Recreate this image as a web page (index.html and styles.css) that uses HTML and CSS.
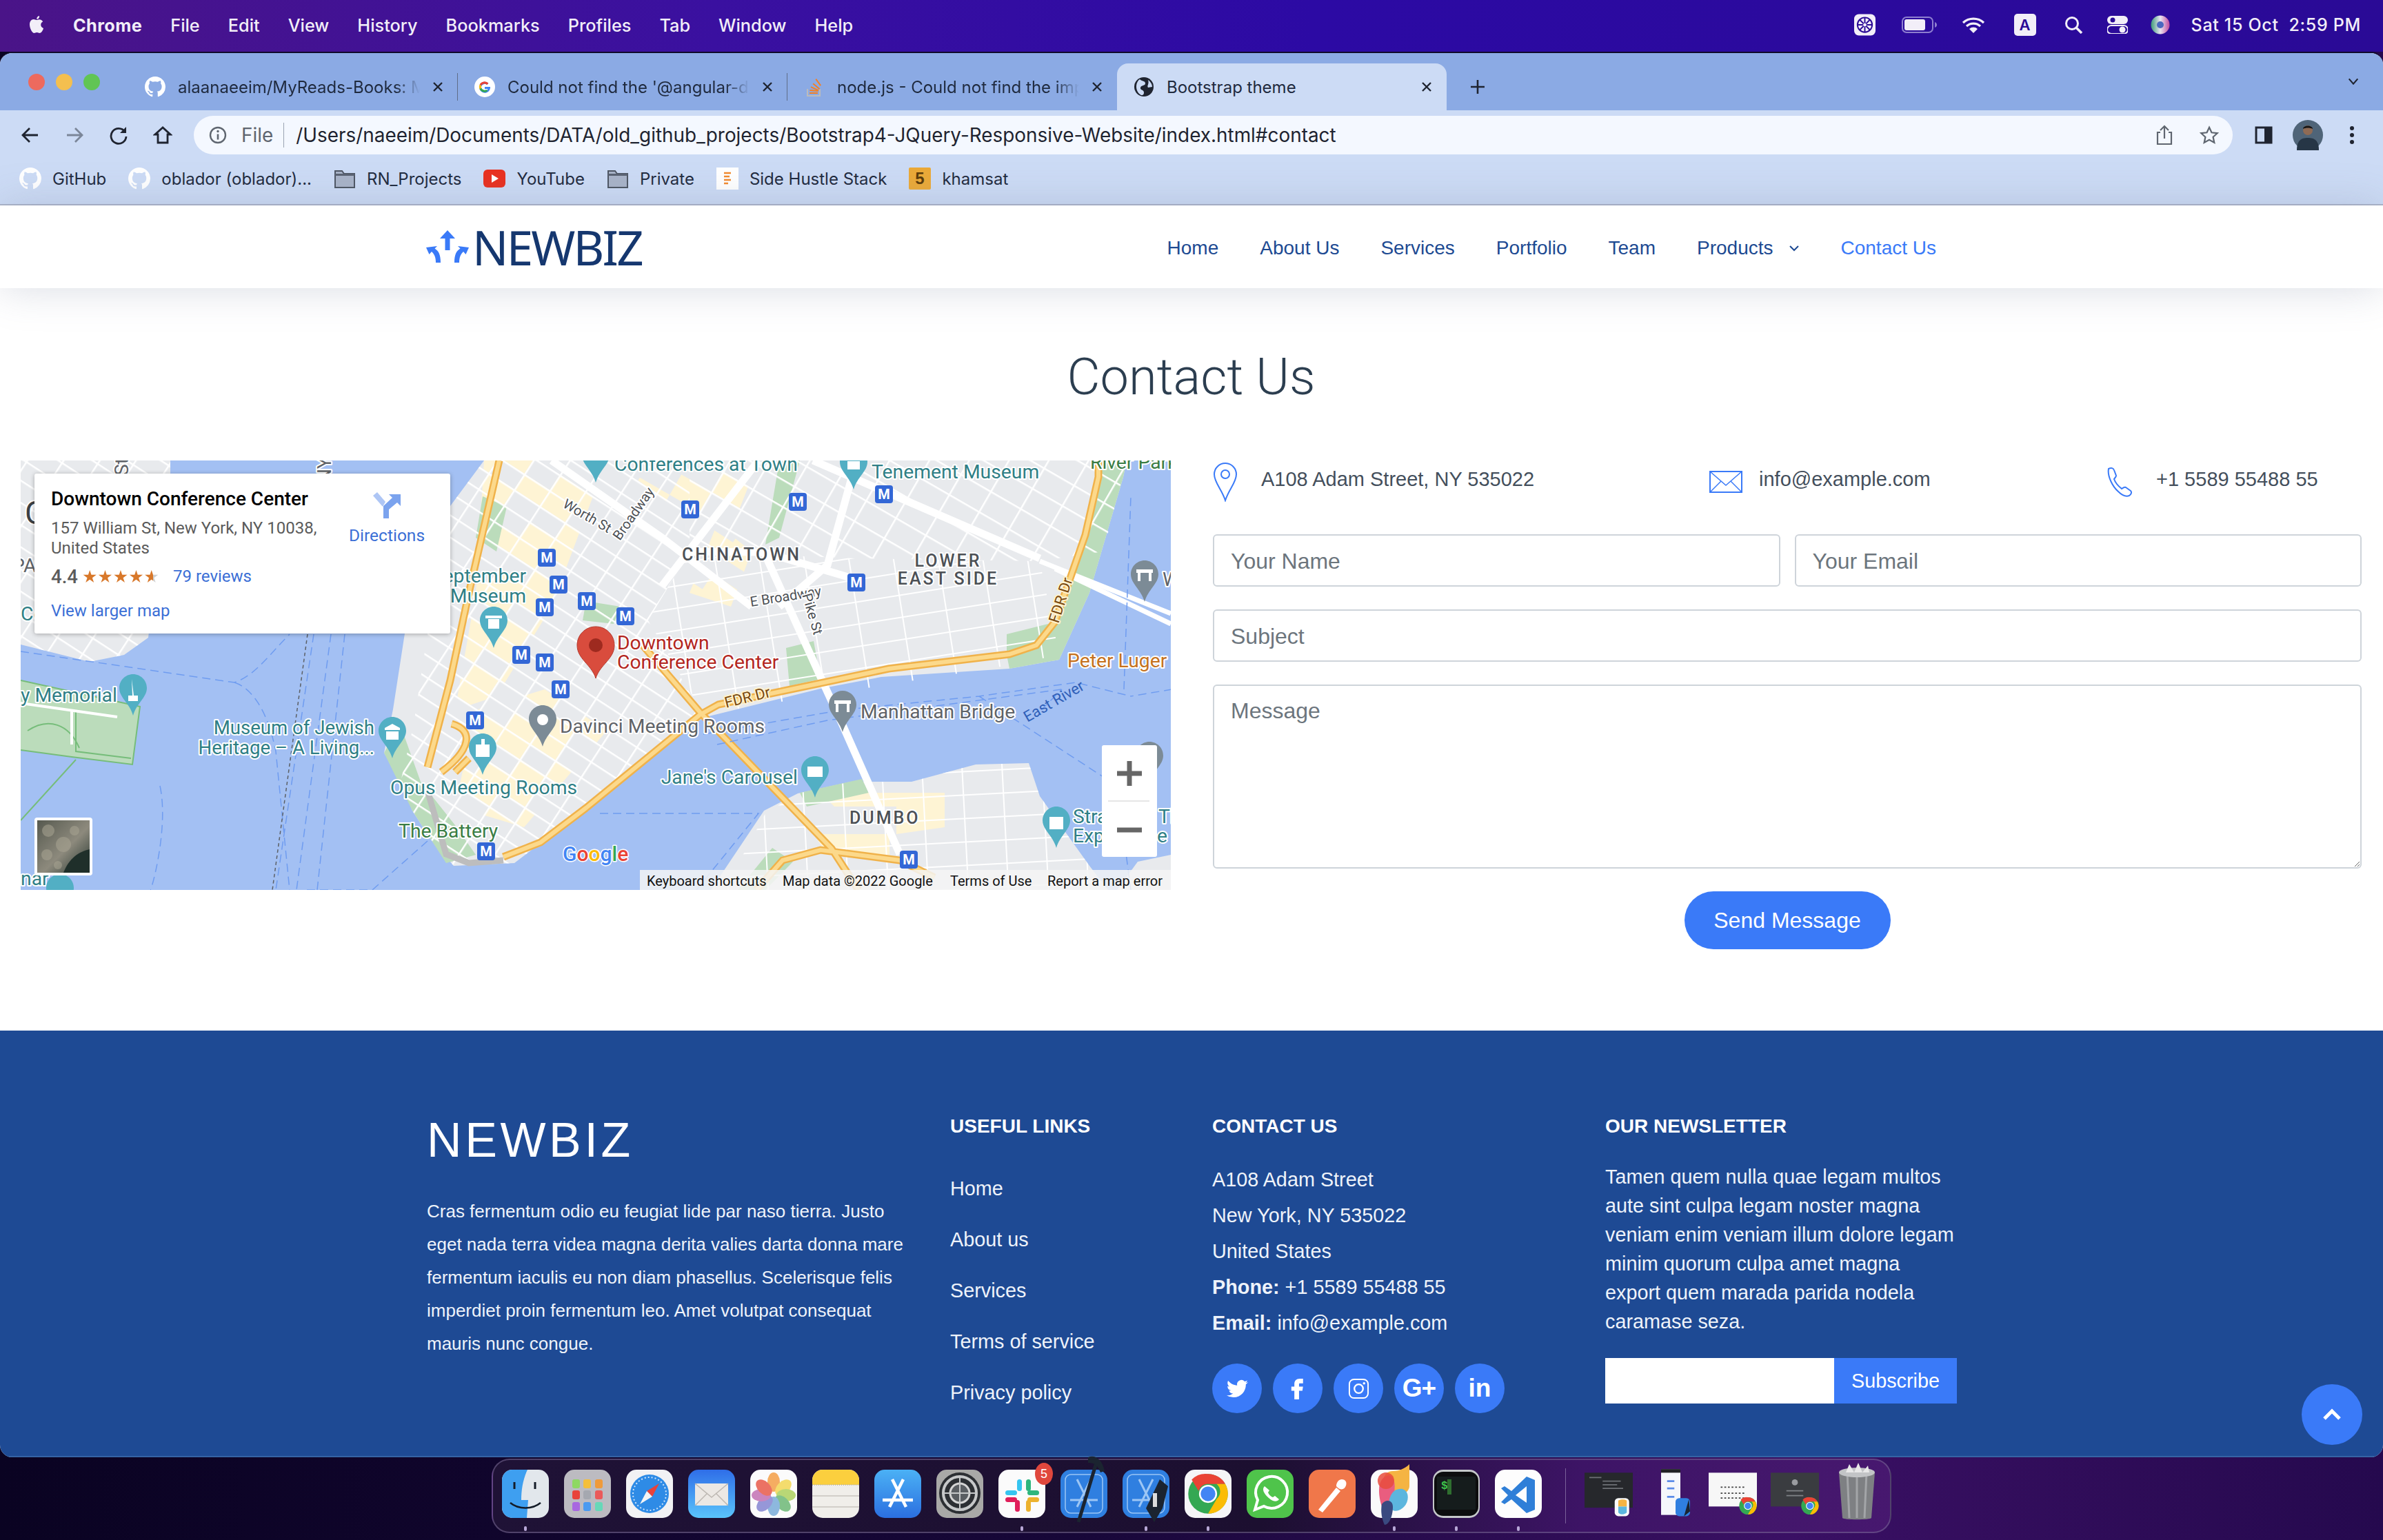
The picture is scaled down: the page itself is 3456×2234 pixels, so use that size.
FILE: index.html
```html
<!DOCTYPE html>
<html lang="en">
<head>
<meta charset="utf-8">
<title>Bootstrap theme</title>
<link rel="stylesheet" href="styles.css">
</head>
<body>
<svg class="defs" width="0" height="0">
  <defs>
    <symbol id="gh" viewBox="0 0 16 16"><path fill="#fff" d="M8 0C3.58 0 0 3.58 0 8c0 3.54 2.29 6.53 5.47 7.59.4.07.55-.17.55-.38 0-.19-.01-.82-.01-1.49-2.01.37-2.53-.49-2.69-.94-.09-.23-.48-.94-.82-1.13-.28-.15-.68-.52-.01-.53.63-.01 1.08.58 1.23.82.72 1.21 1.87.87 2.33.66.07-.52.28-.87.51-1.07-1.78-.2-3.64-.89-3.64-3.95 0-.87.31-1.59.82-2.15-.08-.2-.36-1.02.08-2.12 0 0 .67-.21 2.2.82.64-.18 1.32-.27 2-.27.68 0 1.36.09 2 .27 1.53-1.04 2.2-.82 2.2-.82.44 1.1.16 1.92.08 2.12.51.56.82 1.27.82 2.15 0 3.07-1.87 3.75-3.65 3.95.29.25.54.73.54 1.48 0 1.07-.01 1.93-.01 2.2 0 .21.15.46.55.38A8.013 8.013 0 0016 8c0-4.42-3.58-8-8-8z"/></symbol>
    <symbol id="folder" viewBox="0 0 32 32"><path fill="#a8b3c8" stroke="#4d5563" stroke-width="2" d="M2 5h10l3 4h15v20H2z"/><path fill="#5a6272" d="M2 9h28v3H2z"/></symbol>
    <symbol id="close" viewBox="0 0 20 20"><path stroke="#1f2430" stroke-width="2.4" fill="none" d="M4 4l12 12M16 4L4 16"/></symbol>
    <symbol id="chrome" viewBox="0 0 48 48"><circle cx="24" cy="24" r="23" fill="#34a853"/><path fill="#ea4335" d="M24 1a23 23 0 0 1 20 11.5H24a11.5 11.5 0 0 0-11 8L5 7.5A23 23 0 0 1 24 1z"/><path fill="#fbbc05" d="M44 12.5A23 23 0 0 1 24 47l10-17a11.5 11.5 0 0 0 0-17.500z"/><circle cx="24" cy="24" r="10.500" fill="#fff"/><circle cx="24" cy="24" r="8.500" fill="#4285f4"/></symbol>
    <symbol id="sm" viewBox="0 0 26 26"><rect width="26" height="26" rx="4" fill="#3367d6"/><text x="13" y="20" class="sub-m">M</text></symbol>
    <symbol id="pin" viewBox="0 0 40 60"><path d="M20 0C9 0 0 9 0 20c0 14 15 22 20 40 5-18 20-26 20-40C40 9 31 0 20 0z"/></symbol>
    <pattern id="g1" width="44" height="27" patternUnits="userSpaceOnUse" patternTransform="rotate(33)"><path d="M0 0H44M0 0V27" stroke="#fff" stroke-width="5" fill="none"/></pattern>
    <pattern id="g2" width="50" height="34" patternUnits="userSpaceOnUse" patternTransform="rotate(30)"><path d="M0 0H50M0 0V34" stroke="#fff" stroke-width="5" fill="none"/></pattern>
    <pattern id="g3" width="64" height="32" patternUnits="userSpaceOnUse" patternTransform="rotate(-9)"><path d="M0 0H64M0 0V32" stroke="#fff" stroke-width="4" fill="none"/></pattern>
    <pattern id="g4" width="58" height="34" patternUnits="userSpaceOnUse" patternTransform="rotate(-3)"><path d="M0 0H58M0 0V34" stroke="#fff" stroke-width="4" fill="none"/></pattern>
    <pattern id="b1" width="132" height="81" patternUnits="userSpaceOnUse" patternTransform="rotate(33)"><path fill="#fef4d4" d="M0 0h44v27H0zM88 0h44v27H88zM44 27h44v27H44zM0 54h44v27H0zM44 54h44v27H44z"/></pattern>
    <pattern id="b2" width="150" height="102" patternUnits="userSpaceOnUse" patternTransform="rotate(30)"><path fill="#fef4d4" d="M0 0h50v34H0zM100 34h50v34h-50zM50 68h50v34H50z"/></pattern>
    <linearGradient id="thumbg" x1="0" y1="0" x2="1" y2="1"><stop offset="0" stop-color="#56594f"/><stop offset=".55" stop-color="#8d8a7d"/><stop offset="1" stop-color="#26352f"/></linearGradient>
  </defs>
</svg>

<header class="menubar">
  <svg class="apple" viewBox="0 0 24 30"><path fill="#f2eef8" d="M17 2c-2 .3-4 2.300-3.800 4.800C15.500 7 17.400 4.800 17 2zM13 8c-1.500 0-2.500-1-4.200-1C5.500 7 3 10 3 14.500 3 20 6.500 27 9.500 27c1.500 0 2.200-1 4-1s2.300 1 4 1c2.500 0 5-4.500 5.500-7-2.500-1-3.800-2.800-3.800-5 0-2 1-3.600 3-4.800-1.200-1.800-3.300-3-5.300-3-1.700 0-2.900 .8-3.900 .8z"/></svg>
  <nav class="menu">
    <span class="menu-app">Chrome</span><span>File</span><span>Edit</span><span>View</span><span>History</span><span>Bookmarks</span><span>Profiles</span><span>Tab</span><span>Window</span><span>Help</span>
  </nav>
  <div class="status">
    <svg class="st st-1" viewBox="0 0 32 32"><rect width="32" height="32" rx="7" fill="#f2eef8"/><circle cx="16" cy="16" r="11" fill="none" stroke="#2a0a96" stroke-width="2"/><path d="M16 5v22M5 16h22M8 8l16 16M24 8L8 24" stroke="#2a0a96" stroke-width="2"/><circle cx="16" cy="16" r="3" fill="#f2eef8" stroke="#2a0a96"/></svg>
    <svg class="st st-2" viewBox="0 0 52 24"><rect x="1" y="1" width="44" height="22" rx="6" fill="none" stroke="#8e7fd0" stroke-width="2"/><rect x="4" y="4" width="30" height="16" rx="3" fill="#f2eef8"/><path d="M48 8c2 1 3 2 3 4s-1 3-3 4z" fill="#8e7fd0"/></svg>
    <svg class="st st-3" viewBox="0 0 34 24"><path d="M2 9a22 22 0 0 1 30 0M7 14a15 15 0 0 1 20 0" fill="none" stroke="#f2eef8" stroke-width="3.200"/><path d="M17 24l-6-6a8.500 8.500 0 0 1 12 0z" fill="#f2eef8"/></svg>
    <span class="st-a">A</span>
    <svg class="st st-5" viewBox="0 0 28 26"><circle cx="11" cy="11" r="8.500" fill="none" stroke="#f2eef8" stroke-width="3"/><path d="M17 17l8 8" stroke="#f2eef8" stroke-width="3.500"/></svg>
    <svg class="st st-6" viewBox="0 0 30 26"><rect y="0" width="30" height="12" rx="6" fill="#f2eef8"/><circle cx="8" cy="6" r="3.500" fill="#2a0a96"/><rect y="14" width="30" height="12" rx="6" fill="none" stroke="#f2eef8" stroke-width="2"/><circle cx="22" cy="20" r="4.500" fill="#f2eef8"/></svg>
    <svg class="st st-7" viewBox="0 0 30 28"><defs><linearGradient id="siri" x1="0" x2="1"><stop offset="0" stop-color="#3d9a7a"/><stop offset=".5" stop-color="#e9e5f2"/><stop offset="1" stop-color="#c04a9e"/></linearGradient></defs><circle cx="15" cy="14" r="13.500" fill="url(#siri)"/><circle cx="15" cy="14" r="5" fill="#4a68c0"/></svg>
    <span class="clock">Sat 15 Oct&nbsp; 2:59 PM</span>
  </div>
</header>

<main class="window">
  <div class="tabstrip">
    <div class="lights"><i class="red"></i><i class="yellow"></i><i class="green"></i></div>
    <div class="tab"><svg class="fav"><use href="#gh"/></svg><span class="tab-title">alaanaeeim/MyReads-Books: M</span><svg class="x"><use href="#close"/></svg></div>
    <div class="tab"><svg class="fav" viewBox="0 0 30 30"><circle cx="15" cy="15" r="15" fill="#fff"/><path d="M23 15h-8v3h4.500a5 5 0 1 1-1.300-6l2.200-2.200A8 8 0 1 0 23 15z" fill="#4285f4"/><path d="M7.600 11.500a8 8 0 0 1 12.800-1.700l-2.200 2.200a5 5 0 0 0-8 1z" fill="#ea4335"/><path d="M7.600 11.500a8 8 0 0 0 0 7l2.600-2a5 5 0 0 1 0-3z" fill="#fbbc05"/><path d="M7.600 18.500a8 8 0 0 0 12 2.500l-2.300-2a5 5 0 0 1-7.100-2.500z" fill="#34a853"/></svg><span class="tab-title">Could not find the '@angular-d</span><svg class="x"><use href="#close"/></svg></div>
    <div class="tab tab-last"><svg class="fav" viewBox="0 0 30 30"><path d="M5 18v10h18V18" fill="none" stroke="#bcbbbb" stroke-width="2"/><path d="M8 25h12v-2H8zm.3-4l12 1 .2-2-12-1zm1.300-5l11 5 .8-1.800-11-5zm3-5l9.500 8 1.300-1.500-9.500-8zM18 3l-1.600 1.200 7 9.600 1.600-1.200z" fill="#f48024"/></svg><span class="tab-title">node.js - Could not find the imp</span><svg class="x"><use href="#close"/></svg></div>
    <div class="tab tab-active"><svg class="fav" viewBox="0 0 30 30"><circle cx="15" cy="15" r="14" fill="#1f2430"/><path d="M9 4c3 3 8 2 8 6s-6 2-7 6 5 3 5 7-2 4-4 4c-4-2-7-7-7-12S6 6 9 4zM21 5c3 2 6 6 6 10l-6 1c-2-3 2-5 0-11z" fill="#ccdbf5"/></svg><span class="tab-title">Bootstrap theme</span><svg class="x"><use href="#close"/></svg></div>
    <svg class="plus" viewBox="0 0 24 24"><path d="M12 2v20M2 12h20" stroke="#1f2430" stroke-width="2.600"/></svg>
    <svg class="tabs-menu" viewBox="0 0 20 14"><path d="M3 3l7 8 7-8" fill="none" stroke="#1f2430" stroke-width="2.400"/></svg>
  </div>

  <div class="toolbar">
    <button class="tbtn"><svg viewBox="0 0 28 28"><path d="M25 14H4M13 4L3 14l10 10" fill="none" stroke="#1f2430" stroke-width="2.800"/></svg></button>
    <button class="tbtn"><svg viewBox="0 0 28 28"><path d="M3 14h21M15 4l10 10-10 10" fill="none" stroke="#7b8699" stroke-width="2.800"/></svg></button>
    <button class="tbtn"><svg viewBox="0 0 28 28"><path d="M23 9a11 11 0 1 0 2 7" fill="none" stroke="#1f2430" stroke-width="2.800"/><path d="M25 2v9h-9z" fill="#1f2430"/></svg></button>
    <button class="tbtn"><svg viewBox="0 0 28 28"><path d="M14 3L3 13h4v12h14V13h4z" fill="none" stroke="#1f2430" stroke-width="2.800"/></svg></button>
    <div class="omnibox">
      <svg class="info" viewBox="0 0 26 26"><circle cx="13" cy="13" r="11" fill="none" stroke="#5f6670" stroke-width="2.400"/><path d="M13 11.500v8" stroke="#5f6670" stroke-width="2.600"/><circle cx="13" cy="7.500" r="1.700" fill="#5f6670"/></svg>
      <span class="scheme">File</span>
      <span class="url">/Users/naeeim/Documents/DATA/old_github_projects/Bootstrap4-JQuery-Responsive-Website/index.html#contact</span>
      <svg class="omni-i" viewBox="0 0 26 30"><path d="M7 11H3v17h20V11h-4" fill="none" stroke="#5f6670" stroke-width="2.200"/><path d="M13 20V2M7 8l6-6 6 6" fill="none" stroke="#5f6670" stroke-width="2.200"/></svg>
      <svg class="omni-i" viewBox="0 0 30 30"><path d="M15 3l3.700 8 8.800 1-6.500 6 1.800 8.700L15 22.300 7.200 26.700 9 18l-6.500-6 8.800-1z" fill="none" stroke="#5f6670" stroke-width="2.400"/></svg>
    </div>
    <button class="tbtn tbtn-side"><svg viewBox="0 0 28 28"><rect x="3" y="3" width="22" height="22" fill="none" stroke="#1f2430" stroke-width="3"/><rect x="15" y="3" width="10" height="22" fill="#1f2430"/></svg></button>
    <button class="tbtn"><svg class="avatar" viewBox="0 0 44 44"><circle cx="22" cy="22" r="22" fill="#4f6478"/><path d="M6 44c0-14 6-18 16-18s16 4 16 18z" fill="#263646"/><circle cx="22" cy="15" r="7" fill="#8f6b55"/><path d="M15 13c0-6 14-6 14 0-4-2-10-2-14 0z" fill="#161616"/></svg></button>
    <button class="tbtn"><svg viewBox="0 0 8 28" class="dots"><circle cx="4" cy="4" r="3" fill="#1f2430"/><circle cx="4" cy="14" r="3" fill="#1f2430"/><circle cx="4" cy="24" r="3" fill="#1f2430"/></svg></button>
  </div>

  <div class="bookmarks">
    <a><svg class="bm"><use href="#gh"/></svg>GitHub</a>
    <a><svg class="bm"><use href="#gh"/></svg>oblador (oblador)...</a>
    <a><svg class="bm"><use href="#folder"/></svg>RN_Projects</a>
    <a><svg class="bm" viewBox="0 0 32 32"><rect y="3" width="32" height="26" rx="6" fill="#e9301f"/><path d="M12 10l10 6-10 6z" fill="#fff"/></svg>YouTube</a>
    <a><svg class="bm"><use href="#folder"/></svg>Private</a>
    <a><svg class="bm" viewBox="0 0 32 32"><rect width="32" height="32" fill="#fff"/><path d="M11 8h10M11 13h8M11 18h10M11 23h6" stroke="#f28a2e" stroke-width="2.500"/></svg>Side Hustle Stack</a>
    <a><svg class="bm" viewBox="0 0 32 32"><rect width="32" height="32" rx="2" fill="#eba937"/><text x="16" y="24" class="five">5</text></svg>khamsat</a>
  </div>

  <div class="site">
    <div class="site-nav">
      <div class="logo">
        <svg class="logo-mark" viewBox="0 0 62 48"><path fill="#3a7af8" d="M31 0l11 12h-7.500v17h-7V12H20zM0 25l16-2-3.500 3.500C18 30 21 35 21 47h-7c0-8-2-12-6-16l-3.500 4zM62 25L46 23l3.500 3.500C44 30 41 35 41 47h7c0-8 2-12 6-16l3.500 4z"/></svg>
        <span class="logo-text">NEWBIZ</span>
      </div>
      <nav class="site-links">
        <a>Home</a><a>About Us</a><a>Services</a><a>Portfolio</a><a>Team</a>
        <a class="drop">Products<svg viewBox="0 0 16 10"><path d="M2 2l6 6 6-6" fill="none" stroke="#1d4a92" stroke-width="2"/></svg></a>
        <a class="active">Contact Us</a>
      </nav>
    </div>

    <section class="contact">
      <h1>Contact Us</h1>
      <div class="contact-row">
        <div class="map">
          <svg class="map-svg" viewBox="30 668 1668 623">
            <rect x="30" y="668" width="1668" height="623" fill="#a3c0f3"/>
            <!-- land -->
            <path class="land" d="M30 668H247V700L230 800 215 925 180 950 130 960 30 935z"/>
            <path class="land" d="M702 668H1634L1629 692 1580 860 1536 957 1464 970 1278 982 1190 999 1020 1041 850 1172 746 1252 658 1256 625 1218 598 1176 581 1134 557 1092 570 1029 587 919 653 734z"/>
            <path class="land" d="M1031 1291L1108 1176 1157 1151 1234 1134 1322 1134 1415 1109 1492 1107 1508 1155 1580 1256 1607 1291z"/>
            <path class="land" d="M1620 1291L1650 1250 1698 1240V1291z"/>
            <!-- beige blocks -->
            <path fill="url(#b1)" d="M702 668H790L860 720 800 880 720 1010 660 1030 690 860z"/>
            <path fill="url(#b2)" d="M880 668H1100L1060 770 1010 760 930 700z"/>
            <path fill="url(#b1)" d="M690 1030L790 1000 880 1060 760 1200 660 1170z"/>
            <path fill="url(#b1)" d="M1040 760L1090 800 1060 880 1000 860z"/>
            <path class="beige" d="M1190 1150H1370L1370 1200 1300 1210 1300 1170H1210zM1180 1210H1290V1240H1200z"/>
            <path class="green" d="M1464 970L1536 957 1580 860 1629 692 1634 668H1593L1574 776 1530 902 1503 936 1460 950z"/>
            <path class="green" d="M30 987L203 1025 192 1109 104 1098 30 1088z"/>
            <path class="green" d="M557 1092L598 1176 647 1252 690 1240 660 1197 610 1134 580 1050z"/>
            <path class="green" d="M850 872L900 880 890 905 845 900z"/>
            <path class="green" d="M700 720L735 735 720 800 690 780z"/>
            <path class="green" d="M1140 940L1180 930 1190 985 1145 995z"/>
            <path class="green" d="M1460 920L1520 905 1510 945 1460 950z"/>
            <path class="green" d="M1070 1291L1120 1230 1150 1250 1110 1291z"/>
            <path class="green" d="M1160 1150L1250 1130 1260 1150 1170 1170z"/>
            <path class="green" d="M1130 670L1160 668 1130 780 1110 790z"/>
            <!-- street grids -->
            <path fill="url(#g1)" d="M702 668H1000V800L940 900 1020 1040 850 1172 746 1252 658 1256 625 1218 598 1176 581 1134 600 1050 620 919 653 734z"/>
            <path fill="url(#g2)" d="M1000 668H1634L1600 800 1508 814 1240 810 1000 800z"/>
            <path fill="url(#g3)" d="M940 900L1000 800 1240 810 1508 814 1536 950 1464 965 1020 1036z"/>
            <path fill="url(#g4)" d="M1110 1180L1157 1151 1234 1134 1322 1134 1415 1109 1492 1107 1508 1155 1580 1256 1607 1291H1050z"/>
            <path fill="url(#g1)" d="M30 668H247V700L230 800 215 925 180 950 130 960 30 935z"/>
            <path class="thin-green" d="M30 987L203 1025 192 1109 104 1098 30 1088M30 1190L110 1102M40 1060C70 1040 100 1050 115 1085M110 1030V1090L190 1100"/>
            <path class="white-line" d="M30 1020L170 1040M104 1030V1080"/>
            <!-- wide roads -->
            <path class="road-w" d="M1179 668L1508 810M1236 690L1200 820 1130 880M1108 801L1190 982 1223 1054 1305 1239M1000 800L1108 801 1240 840M1100 668L960 850M800 668L960 780 1090 880"/>
            <path class="road-b" d="M1508 814L1698 890"/>
            <path class="road-b" d="M1530 825L1698 905"/>
            <!-- tunnel -->
            <path class="road-g" d="M620 1147L647 1239 680 1252 730 1248"/>
            <!-- highways -->
            <path class="hw-o" d="M850 1172L1015 1037 1042 1022 1190 991 1289 970 1464 949 1503 936 1530 902 1574 776 1593 692V668M932 936L1015 1033 1206 1231 1245 1291M1097 1291L1135 1248 1190 1233 1305 1248 1355 1273M724 668L680 860 653 987 620 1113M730 1243L784 1222 850 1172M640 1120C680 1090 690 1060 655 1050M660 1120L680 1100"/>
            <path class="hw-i" d="M850 1172L1015 1037 1042 1022 1190 991 1289 970 1464 949 1503 936 1530 902 1574 776 1593 692V668M932 936L1015 1033 1206 1231 1245 1291M1097 1291L1135 1248 1190 1233 1305 1248 1355 1273M724 668L680 860 653 987 620 1113M730 1243L784 1222 850 1172M640 1120C680 1090 690 1060 655 1050M660 1120L680 1100"/>
            <!-- ferries -->
            <path class="ferry" d="M30 945L340 990C370 980 390 950 420 920M340 990C370 1000 390 1040 400 1090L420 1291M500 920L460 1291M480 920L430 1291M455 920L400 1291M445 1291L540 1291 620 1220M232 1140C245 1200 220 1291 218 1291M1020 1065L1220 1030 1420 1010 1560 990 1640 1010M1040 1080L1200 1045 1540 1000M1420 1010L1620 1140 1640 1291M1510 1030L1540 1000M1630 1000L1640 720M870 1180H1100L1010 1291M1700 1000L1640 1010"/>
            <path class="ferry-d" d="M446 920L395 1291"/>
            <!-- labels -->
            <text class="t-big" x="36" y="760">C</text>
            <text class="t-gray" x="18" y="830">PA</text>
            <text class="t-teal" x="30" y="900">Co</text>
            <text class="t-gray" x="186" y="690" transform="rotate(-90 186 690)">St</text>
            <text class="t-gray" x="460" y="690" transform="rotate(-90 475 685)">NY</text>
            <text class="t-teal" x="30" y="1018">y Memorial</text>
            <text class="t-teal" x="30" y="1284">nar</text>
            <text class="t-teal t-end t-tight" x="543" y="1065">Museum of Jewish</text>
            <text class="t-teal t-end t-tight" x="543" y="1094">Heritage – A Living...</text>
            <text class="t-teal t-end" x="763" y="845">eptember</text>
            <text class="t-teal t-end" x="763" y="874">Museum</text>
            <text class="t-teal" x="566" y="1152">Opus Meeting Rooms</text>
            <text class="t-park" x="578" y="1215">The Battery</text>
            <text class="t-gray" x="812" y="1063">Davinci Meeting Rooms</text>
            <text class="t-teal" x="891" y="683">Conferences at Town</text>
            <text class="t-teal" x="1264" y="694">Tenement Museum</text>
            <text class="t-park" x="1581" y="680">River Park</text>
            <text class="t-hood" x="989" y="813">CHINATOWN</text>
            <text class="t-hood t-mid" x="1375" y="822">LOWER</text>
            <text class="t-hood t-mid" x="1375" y="848">EAST SIDE</text>
            <text class="t-red" x="895" y="942">Downtown</text>
            <text class="t-red" x="895" y="970">Conference Center</text>
            <text class="t-orange" x="1548" y="968">Peter Luger</text>
            <text class="t-gray" x="1248" y="1042">Manhattan Bridge</text>
            <text class="t-teal t-end" x="1157" y="1137">Jane's Carousel</text>
            <text class="t-hood" x="1232" y="1195">DUMBO</text>
            <text class="t-teal" x="1556" y="1194">Stra</text>
            <text class="t-teal" x="1556" y="1222">Exp</text>
            <text class="t-teal" x="1680" y="1194">Th</text>
            <text class="t-teal" x="1678" y="1222">e</text>
            <text class="t-gray" x="1686" y="850">W</text>
            <text class="t-st" x="1089" y="880" transform="rotate(-9 1089 880)">E Broadway</text>
            <text class="t-st" x="1171" y="890" transform="rotate(74 1171 890) translate(-28 0)">Pike St</text>
            <text class="t-st" x="899" y="785" transform="rotate(-55 899 785)">Broadway</text>
            <text class="t-st" x="815" y="735" transform="rotate(30 815 735)">Worth St</text>
            <text class="t-road" x="1053" y="1027" transform="rotate(-14 1053 1027)">FDR Dr</text>
            <text class="t-road" x="1535" y="905" transform="rotate(-72 1535 905)">FDR Dr</text>
            <text class="t-river" x="1490" y="1048" transform="rotate(-30 1490 1048)">East River</text>
            <text class="t-g" x="816" y="1249"><tspan class="g-b">G</tspan><tspan class="g-r">o</tspan><tspan class="g-y">o</tspan><tspan class="g-b">g</tspan><tspan class="g-gr">l</tspan><tspan class="g-r">e</tspan></text>
            <!-- pins -->
            <g class="pin-teal">
              <use href="#pin" x="696" y="880" width="40" height="60"/><use href="#pin" x="173" y="978" width="40" height="60"/><use href="#pin" x="549" y="1040" width="40" height="60"/><use href="#pin" x="680" y="1064" width="40" height="60"/><use href="#pin" x="67" y="1268" width="40" height="60"/><use href="#pin" x="844" y="640" width="40" height="60"/><use href="#pin" x="1218" y="650" width="40" height="60"/><use href="#pin" x="1162" y="1097" width="40" height="60"/><use href="#pin" x="1512" y="1170" width="40" height="60"/>
            </g>
            <g class="pin-gray">
              <use href="#pin" x="767" y="1023" width="40" height="60"/><use href="#pin" x="1202" y="1002" width="40" height="60"/><use href="#pin" x="1640" y="813" width="40" height="60"/><use href="#pin" x="1647" y="1076" width="40" height="60"/>
            </g>
            <circle cx="787" cy="1044" r="8" fill="#fff"/>
            <path class="mk" d="M704 893h24v4h-24zM708 898h16v14h-16z"/>
            <path class="mk" d="M191 985l3 24h6v8h-14v-8h6z"/>
            <path class="mk" d="M558 1056l11-6 11 6v3h-22zM560 1061h18v12h-18z"/>
            <path class="mk" d="M690 1080h20v18h-20zM698 1072h5v8h-5z"/>
            <path class="mk" d="M1227 664l11-6 11 6v3h-22zM1229 669h18v12h-18z"/>
            <path class="mk" d="M1171 1112h22v15h-22z"/>
            <path class="mk" d="M1522 1185h20v18h-20z"/>
            <path class="mk" d="M1210 1016h24v5h-24zM1212 1021h4v12h-4zM1228 1021h4v12h-4z"/>
            <path class="mk" d="M1648 826h24v5h-24zM1650 831h4v12h-4zM1666 831h4v12h-4z"/>
            <path fill="#d94c3d" stroke="#b33a2e" stroke-width="1" d="M864 909c-15 0-27 12-27 27 0 20 21 28 27 48 6-20 27-28 27-48 0-15-12-27-27-27z"/>
            <circle cx="864" cy="936" r="10" fill="#9e2a1f"/>
            <g>
              <use href="#sm" x="780" y="796" width="26" height="26"/><use href="#sm" x="797" y="835" width="26" height="26"/><use href="#sm" x="777" y="868" width="26" height="26"/><use href="#sm" x="838" y="859" width="26" height="26"/><use href="#sm" x="743" y="937" width="26" height="26"/><use href="#sm" x="777" y="948" width="26" height="26"/><use href="#sm" x="800" y="987" width="26" height="26"/><use href="#sm" x="676" y="1032" width="26" height="26"/><use href="#sm" x="692" y="1222" width="26" height="26"/><use href="#sm" x="988" y="726" width="26" height="26"/><use href="#sm" x="1144" y="715" width="26" height="26"/><use href="#sm" x="1269" y="704" width="26" height="26"/><use href="#sm" x="1229" y="832" width="26" height="26"/><use href="#sm" x="894" y="881" width="26" height="26"/><use href="#sm" x="1305" y="1234" width="26" height="26"/>
            </g>
            <!-- attribution -->
            <rect x="928" y="1262" width="770" height="29" class="attr-bg"/>
            <text class="t-attr" x="938" y="1285">Keyboard shortcuts</text>
            <text class="t-attr" x="1135" y="1285">Map data ©2022 Google</text>
            <text class="t-attr" x="1378" y="1285">Terms of Use</text>
            <text class="t-attr" x="1519" y="1285">Report a map error</text>
            <!-- zoom control -->
            <rect x="1598" y="1081" width="80" height="162" rx="3" fill="#fff"/>
            <path d="M1607 1162h60" stroke="#e6e6e6" stroke-width="2"/>
            <path d="M1620 1122h36M1638 1104v36M1620 1204h36" stroke="#666" stroke-width="7"/>
            <!-- thumbnail -->
            <rect x="50" y="1186" width="84" height="84" rx="4" fill="#fff"/>
            <rect x="54" y="1190" width="76" height="76" fill="url(#thumbg)"/>
            <g class="sat"><circle cx="70" cy="1205" r="9"/><circle cx="92" cy="1225" r="11"/><circle cx="68" cy="1240" r="8"/><circle cx="108" cy="1205" r="7"/><circle cx="84" cy="1255" r="6"/></g>
            <path d="M92 1266C100 1245 115 1235 130 1232V1266z" fill="#1f2f2a"/>
          </svg>
          <div class="place-card">
            <div class="place-main">
              <div class="place-name">Downtown Conference Center</div>
              <div class="place-addr">157 William St, New York, NY 10038,<br>United States</div>
              <div class="place-rating"><b>4.4</b><span class="stars">★★★★★</span><a>79 reviews</a></div>
              <a class="place-larger">View larger map</a>
            </div>
            <div class="place-dir">
              <svg viewBox="0 0 40 38"><path fill="#aec6f5" d="M0 5L6 0l12 14-4 7z"/><path fill="#7ba3ee" d="M15 38V20L28 8l-5-5h17v17l-5-5-12 10v13z"/></svg>
              <a>Directions</a>
            </div>
          </div>
        </div>

        <div class="contact-side">
          <div class="info-row">
            <div class="info-item"><svg class="ic-pin" viewBox="0 0 36 58"><path d="M18 56C13 40 2 30 2 18a16 16 0 0 1 32 0c0 12-11 22-16 38z" fill="none" stroke="#3a7af8" stroke-width="2"/><circle cx="18" cy="18" r="6" fill="none" stroke="#3a7af8" stroke-width="2"/></svg><span>A108 Adam Street, NY 535022</span></div>
            <div class="info-item"><svg class="ic-mail" viewBox="0 0 48 32"><rect x="1" y="1" width="46" height="30" fill="none" stroke="#3a7af8" stroke-width="2"/><path d="M1 1l23 20L47 1M1 31l16-16M47 31L31 15" fill="none" stroke="#3a7af8" stroke-width="1.500"/></svg><span>info@example.com</span></div>
            <div class="info-item"><svg class="ic-phone" viewBox="0 0 44 44"><path d="M3 3c4-2 7-1 8 2l3 8c0 2-2 3-3 5 2 6 6 10 11 14 2-1 4-3 6-2l7 5c2 2 1 5-2 7-5 2-10 0-16-6C9 29 1 14 3 3z" fill="none" stroke="#3a7af8" stroke-width="2"/></svg><span>+1 5589 55488 55</span></div>
          </div>
          <form class="contact-form">
            <div class="form-pair">
              <input class="field" type="text" placeholder="Your Name">
              <input class="field" type="text" placeholder="Your Email">
            </div>
            <input class="field" type="text" placeholder="Subject">
            <textarea class="field field-area" placeholder="Message"></textarea>
            <button class="send" type="button">Send Message</button>
          </form>
        </div>
      </div>
    </section>

    <footer class="footer">
      <div class="f-about">
        <div class="f-logo">NEWBIZ</div>
        <p>Cras fermentum odio eu feugiat lide par naso tierra. Justo<br>eget nada terra videa magna derita valies darta donna mare<br>fermentum iaculis eu non diam phasellus. Scelerisque felis<br>imperdiet proin fermentum leo. Amet volutpat consequat<br>mauris nunc congue.</p>
      </div>
      <div class="f-links">
        <h4>USEFUL LINKS</h4>
        <ul><li>Home</li><li>About us</li><li>Services</li><li>Terms of service</li><li>Privacy policy</li></ul>
      </div>
      <div class="f-contact">
        <h4>CONTACT US</h4>
        <address>A108 Adam Street<br>New York, NY 535022<br>United States<br><b>Phone:</b> +1 5589 55488 55<br><b>Email:</b> info@example.com</address>
        <div class="socials">
          <a><svg viewBox="0 0 24 24"><path fill="#fff" d="M23.953 4.57a10 10 0 01-2.825.775 4.958 4.958 0 002.163-2.723c-.951.555-2.005.959-3.127 1.184a4.92 4.92 0 00-8.384 4.482C7.69 8.095 4.067 6.13 1.64 3.162a4.822 4.822 0 00-.666 2.475c0 1.71.87 3.213 2.188 4.096a4.904 4.904 0 01-2.228-.616v.06a4.923 4.923 0 003.946 4.827 4.996 4.996 0 01-2.212.085 4.936 4.936 0 004.604 3.417 9.867 9.867 0 01-6.102 2.105c-.39 0-.779-.023-1.17-.067a13.995 13.995 0 007.557 2.209c9.053 0 13.998-7.496 13.998-13.985 0-.21 0-.42-.015-.63A9.935 9.935 0 0024 4.59z"/></svg></a>
          <a><svg viewBox="0 0 24 32"><path fill="#fff" d="M14.500 8h5V1h-5C9.500 1 6.500 4 6.500 9v4H2v6h4.500v13h7V19h5l1-6h-6V9.500c0-1 .5-1.500 1-1.500z"/></svg></a>
          <a><svg viewBox="0 0 32 32"><rect x="2" y="2" width="28" height="28" rx="7" fill="none" stroke="#fff" stroke-width="2"/><circle cx="16" cy="16" r="6.500" fill="none" stroke="#fff" stroke-width="2.400"/><circle cx="24" cy="8" r="1.800" fill="#fff"/></svg></a>
          <a class="s-text s-g">G+</a>
          <a class="s-text">in</a>
        </div>
      </div>
      <div class="f-news">
        <h4>OUR NEWSLETTER</h4>
        <p>Tamen quem nulla quae legam multos<br>aute sint culpa legam noster magna<br>veniam enim veniam illum dolore legam<br>minim quorum culpa amet magna<br>export quem marada parida nodela<br>caramase seza.</p>
        <form class="sub-form"><input class="sub-input" type="text"><button class="sub-btn" type="button">Subscribe</button></form>
      </div>
      <a class="to-top"><svg viewBox="0 0 28 18"><path d="M3 15L14 4l11 11" fill="none" stroke="#fff" stroke-width="5"/></svg></a>
    </footer>
  </div>
</main>

<div class="desk">
  <div class="dock">
    <div class="di run"><svg viewBox="0 0 68 70"><rect width="68" height="70" rx="15" fill="#e2e7ec"/><path d="M0 15a15 15 0 0 1 15-15h22c-7 15-9 30-9 44H38l-2 26H15A15 15 0 0 1 0 55z" fill="#3e9ff0"/><path d="M18 18v10M48 18v10" stroke="#141c28" stroke-width="3"/><path d="M12 48c12 10 32 10 44 0" fill="none" stroke="#141c28" stroke-width="2.500"/></svg></div>
    <div class="di"><svg viewBox="0 0 68 70"><rect width="68" height="70" rx="15" fill="#bcbbc1"/><g><rect x="12" y="14" width="11" height="13" rx="3" fill="#8ed862"/><rect x="28" y="14" width="11" height="13" rx="3" fill="#f5bf3c"/><rect x="45" y="14" width="11" height="13" rx="3" fill="#ef9a3a"/><rect x="12" y="30" width="11" height="13" rx="3" fill="#e8423a"/><rect x="28" y="30" width="11" height="13" rx="3" fill="#a5a8b0"/><rect x="45" y="30" width="11" height="13" rx="3" fill="#ea5a5a"/><rect x="12" y="47" width="11" height="13" rx="3" fill="#a868e0"/><rect x="28" y="47" width="11" height="13" rx="3" fill="#4a9af0"/><rect x="45" y="47" width="11" height="13" rx="3" fill="#67d8b8"/></g></svg></div>
    <div class="di"><svg viewBox="0 0 68 70"><rect width="68" height="70" rx="15" fill="#f2f2f4"/><circle cx="34" cy="35" r="28" fill="#2e8be6"/><circle cx="34" cy="35" r="24" fill="none" stroke="#cfe4fa" stroke-width="2" stroke-dasharray="2 3"/><path d="M48 20L30 31l8 8z" fill="#e8423a"/><path d="M20 50l10-19 8 8z" fill="#f4f4f4"/></svg></div>
    <div class="di"><svg viewBox="0 0 68 70"><defs><linearGradient id="mailg" x1="0" y1="0" x2="0" y2="1"><stop offset="0" stop-color="#2f6ee8"/><stop offset="1" stop-color="#5ac4fb"/></linearGradient></defs><rect width="68" height="70" rx="15" fill="url(#mailg)"/><rect x="10" y="20" width="48" height="32" rx="3" fill="#ece8e4"/><path d="M10 20l24 20 24-20M10 52l18-18M58 52L40 34" fill="none" stroke="#bdb8b2" stroke-width="1.500"/></svg></div>
    <div class="di"><svg viewBox="0 0 68 70"><rect width="68" height="70" rx="15" fill="#fbfbfb"/><g opacity=".8"><ellipse cx="34" cy="18" rx="9" ry="14" fill="#f49a3d"/><ellipse cx="48" cy="26" rx="9" ry="14" fill="#f3d54a" transform="rotate(45 48 26)"/><ellipse cx="52" cy="37" rx="14" ry="9" fill="#a9cf55"/><ellipse cx="47" cy="49" rx="9" ry="14" fill="#65b56f" transform="rotate(-45 47 49)"/><ellipse cx="34" cy="53" rx="9" ry="14" fill="#72a8d8"/><ellipse cx="21" cy="49" rx="9" ry="14" fill="#7e7fd0" transform="rotate(45 21 49)"/><ellipse cx="16" cy="37" rx="14" ry="9" fill="#c068b0"/><ellipse cx="20" cy="26" rx="9" ry="14" fill="#e8503f" transform="rotate(-45 20 26)"/></g></svg></div>
    <div class="di"><svg viewBox="0 0 68 70"><rect width="68" height="70" rx="15" fill="#f0eeea"/><path d="M0 22V15A15 15 0 0 1 15 0h38a15 15 0 0 1 15 15v7z" fill="#fbcf3e"/><path d="M0 22h68" stroke="#b9b4ac" stroke-width="2" stroke-dasharray="1 2"/><path d="M0 38h68M0 54h68" stroke="#d2cfc9" stroke-width="2"/></svg></div>
    <div class="di"><svg viewBox="0 0 68 70"><defs><linearGradient id="appg" x1="0" y1="0" x2="0" y2="1"><stop offset="0" stop-color="#4bb1f5"/><stop offset="1" stop-color="#2b6fe0"/></linearGradient></defs><rect width="68" height="70" rx="15" fill="url(#appg)"/><path d="M26 14l20 40M42 14L22 54M12 44h44" stroke="#fff" stroke-width="4.500"/></svg></div>
    <div class="di"><svg viewBox="0 0 68 70"><rect width="68" height="70" rx="15" fill="#a9a9a7"/><circle cx="34" cy="34" r="30" fill="#2c2f33"/><circle cx="34" cy="34" r="24" fill="none" stroke="#c6c8c9" stroke-width="4"/><circle cx="34" cy="34" r="14" fill="#5a5e62" stroke="#d4d4d4" stroke-width="3"/><path d="M34 10v48M10 34h48" stroke="#c6c8c9" stroke-width="2"/></svg></div>
    <div class="di run"><svg viewBox="0 0 68 70"><rect width="68" height="70" rx="15" fill="#fbfbfb"/><rect x="10" y="30" width="17" height="7" rx="3.500" fill="#36c5f0"/><rect x="27" y="14" width="7" height="17" rx="3.500" fill="#36c5f0"/><rect x="40" y="14" width="7" height="17" rx="3.500" fill="#2eb67d"/><rect x="42" y="30" width="17" height="7" rx="3.500" fill="#2eb67d"/><rect x="42" y="40" width="17" height="7" rx="3.500" fill="#ecb22e"/><rect x="40" y="44" width="7" height="17" rx="3.500" fill="#ecb22e"/><rect x="24" y="44" width="7" height="17" rx="3.500" fill="#e01e5a"/><rect x="10" y="40" width="17" height="7" rx="3.500" fill="#e01e5a"/></svg><span class="badge">5</span></div>
    <div class="di"><svg viewBox="0 0 68 70"><rect width="68" height="70" rx="15" fill="#2f7fe0"/><rect x="7" y="7" width="54" height="56" rx="8" fill="none" stroke="#9cc6f5" stroke-width="1.500"/><path d="M24 14l20 40M44 14L24 54M14 44h40" stroke="#9cc6f5" stroke-width="3" fill="none"/><path d="M52 -10L26 76" stroke="#1b2430" stroke-width="5"/><path class="hammer" d="M40 -18c10-4 20 2 24 20l-6 2c-4-10-8-14-18-14z"/></svg></div>
    <div class="di run"><svg viewBox="0 0 68 70"><rect width="68" height="70" rx="15" fill="#2f7fe0"/><rect x="7" y="7" width="54" height="56" rx="8" fill="none" stroke="#9cc6f5" stroke-width="1.500"/><path d="M24 14l20 40M44 14L24 54M14 44h40" stroke="#9cc6f5" stroke-width="3" fill="none"/><path class="hammer" d="M66 24L54 14 34 56l12 20 12-20z"/><path d="M44 34h6v20h-6z" fill="#dcdcdc"/></svg></div>
    <div class="di run"><svg viewBox="0 0 68 70"><rect width="68" height="70" rx="15" fill="#f5f5f7"/><use href="#chrome" x="4" y="5" width="60" height="60"/></svg></div>
    <div class="di"><svg viewBox="0 0 68 70"><rect width="68" height="70" rx="15" fill="#4fc44b"/><path d="M12 58l4-14a23 23 0 1 1 9 9z" fill="none" stroke="#fff" stroke-width="4"/><path d="M26 24c-4 4-2 10 6 17 7 6 12 6 15 2l-6-5-3 2c-3-1-6-4-7-7l2-3z" fill="#fff"/></svg></div>
    <div class="di"><svg viewBox="0 0 68 70"><rect width="68" height="70" rx="15" fill="#f0774a"/><path d="M14 58L40 26l6 5L20 62zM40 24c0-6 4-10 8-10s8 3 6 9-8 8-14 1z" fill="#fff"/></svg></div>
    <div class="di run"><svg viewBox="0 0 68 70"><rect width="68" height="70" rx="15" fill="#fafafa"/><path d="M18 18c0-10 6-16 14-16 10 0 18-4 24-10v32c0 6-8 14-16 14-12 0-22-8-22-20z" fill="#f5b443"/><path d="M12 30c0-14 6-20 14-22 8 2 10 12 8 26l-14 30C14 50 12 40 12 30z" fill="#e95d7f"/><circle cx="22" cy="16" r="12" fill="#e84c3d" opacity=".85"/><path d="M26 52c0-18 10-26 20-24 10 3 10 18 2 26-8 8-18 8-22-2z" fill="#5cb6de"/><path d="M16 50c6-8 16-6 16 4 0 14-6 26-12 26-4-8-6-20-4-30z" fill="#3a4a80"/></svg></div>
    <div class="di run"><svg viewBox="0 0 68 70"><rect width="68" height="70" rx="15" fill="#c5c8ca"/><rect x="2" y="3" width="64" height="64" rx="13" fill="#0c0d0e"/><rect x="6" y="10" width="56" height="48" fill="#151c1c"/><text x="12" y="28" class="term">$</text><path d="M24 14v22" stroke="#2f6f2f" stroke-width="6"/></svg></div>
    <div class="di run"><svg viewBox="0 0 68 70"><rect width="68" height="70" rx="15" fill="#fdfdfd"/><path d="M46 10L24 31 14 24l-5 3 10 10-10 10 5 3 10-7 22 20 12-5V15z" fill="#2f7fd8"/><path d="M46 24v24L30 37z" fill="#fdfdfd"/></svg></div>
    <span class="dock-sep"></span>
    <div class="di thumb"><svg viewBox="0 0 80 70"><rect x="0" y="0" width="80" height="58" fill="#26282c"/><path d="M8 8h20M30 14h30M30 20h24M30 26h34" stroke="#6d7075" stroke-width="2"/><rect x="50" y="42" width="24" height="30" rx="6" fill="#fafafa"/><path d="M56 46c6-2 10-2 14 0v10H56z" fill="#f5b443"/><path d="M56 56h14v10c-6 4-10 4-14 0z" fill="#5cb6de"/></svg></div>
    <div class="di thumb"><svg viewBox="0 0 80 70"><rect x="24" y="-6" width="32" height="76" fill="#f5f7fb"/><rect x="24" y="-6" width="32" height="6" fill="#202225"/><path d="M34 14h12M34 26h12M34 40h12" stroke="#5b8ce8" stroke-width="3"/><rect x="48" y="42" width="24" height="30" rx="6" fill="#2f7fe0"/><path d="M70 44l-8 28 10-8z" fill="#1b2430"/></svg></div>
    <div class="di thumb"><svg viewBox="0 0 80 70"><rect x="0" y="0" width="80" height="56" fill="#f7f7f7"/><path d="M20 24h40M20 34h40M20 42h40" stroke="#404040" stroke-width="2" stroke-dasharray="3 3"/><use href="#chrome" x="50" y="40" width="30" height="30"/></svg></div>
    <div class="di thumb"><svg viewBox="0 0 80 70"><rect x="0" y="0" width="80" height="56" fill="#3a3c40"/><circle cx="40" cy="16" r="5" fill="#9a9ca0"/><path d="M26 30h28M26 38h28" stroke="#7f8286" stroke-width="2"/><use href="#chrome" x="50" y="40" width="30" height="30"/></svg></div>
    <div class="di trash"><svg viewBox="0 0 68 84"><path d="M8 14h52l-5 66c-1 3-41 3-42 0z" fill="#7e8083"/><path d="M20 14l3 66M34 14v66M48 14l-3 66" stroke="#a3a5a8" stroke-width="3"/><ellipse cx="34" cy="14" rx="26" ry="7" fill="#c2c4c6"/><path d="M18 14l5-12 7 12 6-14 6 14 8-10 2 10z" fill="#e8e8e8"/></svg></div>
  </div>
</div>
</body>
</html>
```

FILE: styles.css
```css
* { box-sizing: border-box; }
html, body { margin: 0; padding: 0; }
body {
  width: 3456px;
  height: 2234px;
  overflow: hidden;
  display: flex;
  flex-direction: column;
  font-family: "Liberation Sans", Arial, sans-serif;
  background: linear-gradient(90deg, #0a0322 0%, #170738 45%, #3a1064 75%, #25094e 100%);
}
a { color: inherit; text-decoration: none; }
.defs { position: absolute; }

/* menu bar */
.menubar {
  height: 75px;
  flex: none;
  display: flex;
  align-items: center;
  padding: 0 32px 3px 40px;
  background: linear-gradient(90deg, #4a1488 0%, #3a10a0 30%, #2c0aa4 55%, #2a0a96 100%);
  color: #f2eef8;
  font-family: Inter, "Noto Sans", sans-serif;
  font-size: 25.300px;
}
.apple { width: 24px; height: 30px; margin-right: 42px; }
.menu { display: flex; gap: 41px; font-weight: 500; }
.menu-app { font-weight: 700; letter-spacing: .4px; }
.status { margin-left: auto; display: flex; align-items: center; }
.st { display: block; flex: none; }
.st-1 { width: 31px; height: 32px; }
.st-2 { width: 52px; height: 24px; margin-left: 38px; }
.st-3 { width: 34px; height: 24px; margin-left: 35px; }
.st-a { width: 32px; height: 32px; margin-left: 42px; border-radius: 5px; background: #f2eef8; color: #2a0a96; text-align: center; line-height: 32px; font-size: 22px; font-weight: 600; }
.st-5 { width: 28px; height: 26px; margin-left: 41px; }
.st-6 { width: 30px; height: 26px; margin-left: 34px; }
.st-7 { width: 30px; height: 28px; margin-left: 32px; }
.clock { margin-left: 30px; font-weight: 500; white-space: nowrap; font-size: 25px; letter-spacing: .7px; }

/* browser window */
.window {
  height: 2039px;
  flex: none;
  display: flex;
  flex-direction: column;
  overflow: hidden;
  border-radius: 18px;
  border-top: 2px solid #0f0a2a;
  background: #fff;
  font-family: Inter, "Noto Sans", sans-serif;
}
.tabstrip {
  height: 83px;
  flex: none;
  position: relative;
  display: flex;
  align-items: flex-end;
  padding-left: 186px;
  background: #8baae4;
  color: #1f2a3e;
}
.lights { position: absolute; left: 41px; top: 30px; display: flex; gap: 16px; }
.lights i { width: 24px; height: 24px; border-radius: 50%; display: block; }
.red { background: #ed6a5e; }
.yellow { background: #f4bf4f; }
.green { background: #61c554; }
.tab {
  width: 478px;
  height: 68px;
  flex: none;
  display: flex;
  align-items: center;
  padding: 0 19px 0 24px;
  font-size: 24px;
  position: relative;
}
.tab::after { content: ""; position: absolute; right: 0; top: 14px; height: 40px; width: 1px; background: #5f6d88; }
.tab-last::after, .tab-active::after { display: none; }
.fav { width: 30px; height: 30px; flex: none; margin-right: 18px; }
.tab-title {
  flex: 1;
  min-width: 0;
  white-space: nowrap;
  overflow: hidden;
  -webkit-mask-image: linear-gradient(90deg, #000 90%, transparent 100%);
  mask-image: linear-gradient(90deg, #000 90%, transparent 100%);
}
.x { width: 20px; height: 20px; flex: none; margin-left: 16px; }
.tab-active { background: #ccdbf5; border-radius: 16px 16px 0 0; }
.tab-active .tab-title { -webkit-mask-image: none; mask-image: none; }
.plus { width: 24px; height: 24px; margin: 0 0 22px 33px; flex: none; }
.tabs-menu { position: absolute; right: 34px; top: 34px; width: 18px; height: 14px; }

.toolbar {
  height: 64px;
  flex: none;
  display: flex;
  align-items: flex-end;
  padding-left: 12px;
  background: #ccdbf5;
}
.tbtn { width: 64px; height: 56px; padding: 0; border: 0; background: none; display: flex; align-items: center; justify-content: center; }
.tbtn svg { width: 28px; height: 28px; }
.tbtn .avatar { width: 44px; height: 44px; }
.tbtn .dots { width: 8px; }
.tbtn-side { margin-left: 13px; }
.omnibox {
  width: 2957px;
  height: 56px;
  margin-left: 13px;
  display: flex;
  align-items: center;
  padding: 0 20px 0 22px;
  background: #f4f8ff;
  border-radius: 28px;
  font-size: 27.900px;
  color: #1f2430;
}
.info { width: 26px; height: 26px; flex: none; }
.scheme { margin-left: 21px; color: #5f6670; padding-right: 15px; border-right: 1.500px solid #9aa3b2; line-height: 36px; }
.url { margin-left: 17px; white-space: nowrap; }
.omni-i { width: 28px; height: 30px; flex: none; margin-left: 37px; }
.url + .omni-i { margin-left: auto; }

.bookmarks {
  height: 74px;
  flex: none;
  display: flex;
  align-items: center;
  gap: 32px;
  padding: 0 0 2px 28px;
  background: #ccdbf5;
  border-bottom: 2px solid #aab3c8;
  font-size: 24px;
  color: #1f2a3e;
}
.bookmarks a { display: flex; align-items: center; gap: 16px; }
.bm { width: 32px; height: 32px; flex: none; }
.five { font: 700 24px "Liberation Sans", sans-serif; text-anchor: middle; fill: #5a3a08; }

/* site */
.site { flex: 1; min-height: 0; display: flex; flex-direction: column; font-family: "Liberation Sans", Arial, sans-serif; }
.site-nav {
  height: 120px;
  flex: none;
  position: relative;
  z-index: 1;
  display: flex;
  align-items: center;
  justify-content: space-between;
  padding: 0 648px 0 618px;
  background: #fff;
  box-shadow: 0 0 60px rgba(127, 137, 161, .3);
}
.logo { display: flex; align-items: center; }
.logo-mark { width: 62px; height: 48px; }
.logo-text { margin-left: 5px; font: 400 69px/1 "Noto Sans", sans-serif; color: #15376f; letter-spacing: -2.800px; }
.site-links { display: flex; gap: 60px; padding-top: 4px; font-size: 28px; color: #1d4a92; }
.drop { display: flex; align-items: center; gap: 22px; }
.drop svg { width: 16px; height: 10px; }
.active { color: #3a7af8; }

.contact { flex: none; height: 1077px; padding: 86px 31px 0 30px; background: #fff; }
.contact h1 { margin: 0; text-align: center; font: 300 74px/86px Roboto, sans-serif; color: #2c3e50; }
.contact-row { display: flex; gap: 61px; margin-top: 78px; }
.map { width: 1668px; height: 623px; flex: none; position: relative; overflow: hidden; }
.map-svg { display: block; width: 1668px; height: 623px; font-family: Roboto, sans-serif; }
.land { fill: #e8eaed; }
.beige { fill: #fef4d4; }
.green { fill: #bbdcbb; }
.thin-green { fill: none; stroke: #76bd7a; stroke-width: 2; }
.white-line { fill: none; stroke: #fff; stroke-width: 4; }
.road-w { fill: none; stroke: #fff; stroke-width: 11; }
.road-b { fill: none; stroke: #fff; stroke-width: 7; }
.road-g { fill: none; stroke: #bdbdbd; stroke-width: 9; }
.hw-o { fill: none; stroke: #f0b24a; stroke-width: 11; }
.hw-i { fill: none; stroke: #fcd98b; stroke-width: 6; }
.ferry { fill: none; stroke: #6f9cf0; stroke-width: 1.500; stroke-dasharray: 12 7; }
.ferry-d { fill: none; stroke: #5c6066; stroke-width: 1.500; stroke-dasharray: 5 4; }
.sat { fill: #a9a593; opacity: .55; }
.map-svg text { font-size: 28.300px; paint-order: stroke; stroke: #fff; stroke-width: 4px; stroke-linejoin: round; }
.map-svg .t-end { text-anchor: end; }
.map-svg .t-mid { text-anchor: middle; }
.map-svg .t-tight { font-size: 27.600px; }
.map-svg .t-teal { fill: #2f7f86; }
.map-svg .t-gray { fill: #5f6368; }
.map-svg .t-big { fill: #3c4043; font-size: 46px; }
.map-svg .t-park { fill: #3a7d44; }
.map-svg .t-hood { fill: #4d5156; font-size: 25px; font-weight: 500; letter-spacing: 3px; }
.map-svg .t-red { fill: #b3261e; }
.map-svg .t-orange { fill: #c5721e; }
.map-svg .t-st { fill: #4d5156; font-size: 20px; }
.map-svg .t-road { fill: #7a4a10; font-size: 22px; stroke: #fff3d0; }
.map-svg .t-river { fill: #2f5fb8; font-size: 22px; stroke: none; }
.map-svg .t-g { font-size: 30px; font-weight: 500; stroke-width: 3px; }
.g-b { fill: #4285f4; }
.g-r { fill: #ea4335; }
.g-y { fill: #fbbc05; }
.g-gr { fill: #34a853; }
.map-svg .t-attr { font-size: 20px; fill: #111; stroke: none; }
.attr-bg { fill: #f5f5f5; fill-opacity: .85; }
.pin-teal { fill: #52afc4; }
.pin-gray { fill: #7c8b96; }
.mk { fill: #fff; }
.sub-m { font: 700 20px Roboto, sans-serif; fill: #fff; text-anchor: middle; }

.place-card {
  position: absolute;
  left: 20px;
  top: 19px;
  width: 603px;
  height: 232px;
  display: flex;
  padding: 20px 0 0 24px;
  background: #fff;
  border-radius: 3px;
  box-shadow: 0 1px 6px rgba(0, 0, 0, .3);
  font-family: Roboto, sans-serif;
}
.place-main { width: 430px; flex: none; }
.place-name { font-size: 28px; font-weight: 500; color: #000; line-height: 34px; white-space: nowrap; }
.place-addr { margin-top: 11px; font-size: 24px; line-height: 29px; color: #5b5b5b; white-space: nowrap; }
.place-rating { margin-top: 8px; display: flex; align-items: center; font-size: 24px; color: #3b6fd6; height: 36px; }
.place-rating b { font-size: 27.500px; font-weight: 500; color: #5b5b5b; }
.stars {
  margin-left: 6px;
  font-size: 25px;
  font-family: "DejaVu Sans", sans-serif;
  background: linear-gradient(90deg, #d8782a 92%, #cfcfcf 92%);
  -webkit-background-clip: text;
  background-clip: text;
  color: transparent;
}
.place-rating a { margin-left: 20px; }
.place-larger { display: block; margin-top: 18px; font-size: 24px; color: #3b6fd6; }
.place-dir { margin-left: 4px; display: flex; flex-direction: column; align-items: center; width: 106px; }
.place-dir svg { width: 40px; height: 38px; margin-top: 7px; }
.place-dir a { margin-top: 10px; font-size: 24.500px; color: #3b6fd6; white-space: nowrap; }

.contact-side { flex: 1; min-width: 0; }
.info-row { display: grid; grid-template-columns: 720px 576px auto; height: 107px; color: #444f5c; font-size: 29px; }
.info-item { display: flex; align-items: flex-start; gap: 34px; height: 60px; }
.info-item span { line-height: 55px; white-space: nowrap; }
.ic-pin { width: 36px; height: 58px; margin-top: 2px; flex: none; }
.ic-mail { width: 48px; height: 32px; margin-top: 15px; flex: none; margin-right: -10px; }
.ic-phone { width: 44px; height: 44px; margin-top: 9px; flex: none; margin-right: -6px; }
.contact-form { display: flex; flex-direction: column; gap: 33px; }
.form-pair { display: flex; gap: 21px; }
.field {
  width: 100%;
  height: 76px;
  padding: 2px 24px 0;
  border: 2px solid #ced4da;
  border-radius: 6px;
  background: #fff;
  font: 32px "Liberation Sans", sans-serif;
  color: #495057;
}
.field::placeholder { color: #6c757d; opacity: 1; }
.field-area { height: 267px; padding-top: 18px; resize: vertical; display: block; }
.send {
  width: 299px;
  height: 84px;
  align-self: center;
  border: 0;
  border-radius: 42px;
  background: #3a7af8;
  color: #fff;
  font: 32px "Liberation Sans", sans-serif;
}

/* footer */
.footer {
  flex: 1;
  min-height: 0;
  position: relative;
  display: grid;
  grid-template-columns: 759px 380px 570px 510px;
  padding: 122px 0 0 619px;
  background: #1e4a94;
  border-bottom: 2px solid #3563a4;
  color: #eef3fa;
}
.f-logo { margin: 2px 0 44px; font-size: 70px; line-height: 70px; letter-spacing: 4.600px; color: #fff; }
.f-about p { margin: 0; font-size: 26px; line-height: 48px; white-space: nowrap; }
.footer h4 { margin: 0 0 34px; font-size: 28px; line-height: 34px; font-weight: 700; color: #fff; }
.f-links h4 { margin-bottom: 36px; }
.f-links ul { margin: 0; padding: 0; list-style: none; font-size: 28.800px; line-height: 74px; }
.f-contact address { font-style: normal; font-size: 28.800px; line-height: 52px; white-space: nowrap; }
.socials { display: flex; gap: 16px; margin-top: 33px; }
.socials a { width: 72px; height: 72px; border-radius: 50%; background: #3a7af8; display: flex; align-items: center; justify-content: center; color: #fff; }
.socials svg { width: 31px; height: 31px; }
.s-text { font-size: 37px; font-weight: 700; }
.s-g { letter-spacing: -1px; }
.f-news h4 { margin-bottom: 35px; }
.f-news p { margin: 0; font-size: 28.800px; line-height: 42px; white-space: nowrap; }
.sub-form { display: flex; margin-top: 32px; height: 66px; }
.sub-input { width: 332px; height: 66px; border: 0; background: #fff; }
.sub-btn { width: 178px; height: 66px; border: 0; background: #3a7af8; color: #fff; font: 28.800px "Liberation Sans", sans-serif; }
.to-top { position: absolute; right: 30px; bottom: 16px; width: 88px; height: 88px; border-radius: 50%; background: #3a7af8; display: flex; align-items: center; justify-content: center; }
.to-top svg { width: 28px; height: 18px; }

/* dock */
.desk { flex: 1; min-height: 0; position: relative; }
.dock {
  position: absolute;
  left: 713px;
  top: 2px;
  width: 2030px;
  height: 108px;
  display: flex;
  align-items: flex-start;
  gap: 20px;
  padding: 14px 0 0 12px;
  border: 2px solid rgba(120, 105, 150, .55);
  border-radius: 26px;
  background: linear-gradient(90deg, #1f1236 0%, #1c0f30 55%, #3d1466 78%, #47186f 100%);
}
.di { width: 70px; height: 70px; flex: none; position: relative; }
.di svg { display: block; width: 70px; height: 70px; overflow: visible; }
.run::after { content: ""; position: absolute; left: 33px; bottom: -19px; width: 4px; height: 7px; border-radius: 2px; background: #b9a8d8; }
.badge { position: absolute; right: -10px; top: -10px; width: 26px; height: 32px; border-radius: 50%; background: #e0473d; color: #fff; font: 18px/32px "Liberation Sans", sans-serif; text-align: center; }
.hammer { fill: #1b2430; }
.term { font: 700 16px "Liberation Mono", monospace; fill: #3ec24a; }
.dock-sep { width: 1px; height: 80px; margin: -2px 7px 0 13px; background: rgba(200, 190, 220, .45); flex: none; }
.trash svg { height: 84px; margin-top: -10px; }
```
